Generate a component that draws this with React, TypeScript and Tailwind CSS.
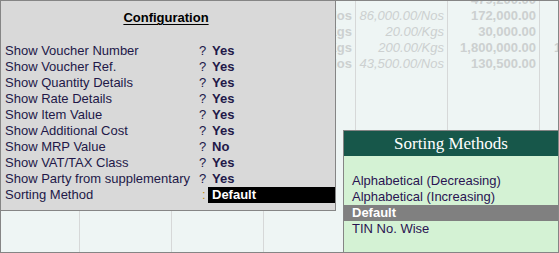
const configRows = [
  { label: "Show Voucher Number", value: "Yes" },
  { label: "Show Voucher Ref.", value: "Yes" },
  { label: "Show Quantity Details", value: "Yes" },
  { label: "Show Rate Details", value: "Yes" },
  { label: "Show Item Value", value: "Yes" },
  { label: "Show Additional Cost", value: "Yes" },
  { label: "Show MRP Value", value: "No" },
  { label: "Show VAT/TAX Class", value: "Yes" },
  { label: "Show Party from supplementary", value: "Yes" },
];

const sortOptions = [
  "Alphabetical (Decreasing)",
  "Alphabetical (Increasing)",
  "Default",
  "TIN No. Wise",
];

// rows of the voucher table lying behind the popups
const bgRows = [
  { unit: "", rate: "", amount: "479,200.00", extra: "" },
  { unit: "Nos", rate: "86,000.00/Nos", amount: "172,000.00", extra: "" },
  { unit: "Kgs", rate: "20.00/Kgs", amount: "30,000.00", extra: "" },
  { unit: "Kgs", rate: "200.00/Kgs", amount: "1,800,000.00", extra: "1,800,000.00" },
  { unit: "Nos", rate: "43,500.00/Nos", amount: "130,500.00", extra: "" },
];

export default function App() {
  return (
    <div
      className="relative w-[559px] h-[253px] overflow-hidden border border-[#858585] bg-[#eef5f4] text-[13px] leading-[16px]"
      style={{ fontFamily: '"Liberation Sans", Arial, sans-serif' }}
    >
      {/* Background table */}
      <div className="flex h-full">
        <div className="w-[79px] shrink-0 border-r border-[#d6d8d8]" />
        <div className="w-[92px] shrink-0 border-r border-[#d6d8d8]" />
        <div className="w-[92px] shrink-0 border-r border-[#d6d8d8]" />
        <div className="w-[92px] shrink-0 border-r border-[#d6d8d8] -mt-[9px] text-right pr-[3px] text-[#ccd0d0] font-bold">
          {bgRows.map((r, i) => (
            <div key={i} className="h-[16px]">{r.unit}</div>
          ))}
        </div>
        <div className="w-[92px] shrink-0 border-r border-[#d6d8d8] -mt-[9px] text-right pr-[3px] text-[#ccd0d0] italic">
          {bgRows.map((r, i) => (
            <div key={i} className="h-[16px]">{r.rate}</div>
          ))}
        </div>
        <div className="w-[92px] shrink-0 border-r border-[#d6d8d8] -mt-[9px] text-right pr-[3px] text-[#ccd0d0] font-bold">
          {bgRows.map((r, i) => (
            <div key={i} className="h-[16px]">{r.amount}</div>
          ))}
        </div>
        <div className="w-[92px] shrink-0 -mt-[9px] pl-[14px] text-[#ccd0d0] font-bold whitespace-nowrap">
          {bgRows.map((r, i) => (
            <div key={i} className="h-[16px]">{r.extra}</div>
          ))}
        </div>
      </div>

      {/* Configuration popup */}
      <div className="absolute left-0 top-0 w-[335px] h-[210px] bg-[#d9d9d9] border-r border-b border-[#858585] text-[#221848]">
        <div className="pt-[9px] pr-[4px] text-center">
          <span className="font-bold underline underline-offset-2 text-black">Configuration</span>
        </div>
        <div className="mt-[17px] pl-[4px]">
          {configRows.map((r) => (
            <div key={r.label} className="flex h-[16px] whitespace-nowrap">
              <span className="w-[194px] shrink-0">{r.label}</span>
              <span className="w-[13px] shrink-0">?</span>
              <span className="font-bold">{r.value}</span>
            </div>
          ))}
          <div className="flex h-[16px] whitespace-nowrap">
            <span className="w-[194px] shrink-0">Sorting Method</span>
            <span className="w-[9px] shrink-0 pl-[3px] text-[#c08a10]">:</span>
            <span className="flex-1 bg-black text-white font-bold pl-[4px]">Default</span>
          </div>
        </div>
      </div>

      {/* Sorting Methods list */}
      <div className="absolute left-[342px] top-[129px] right-0 bottom-0 border-l border-t border-[#858585] bg-[#d4f2d4] flex flex-col">
        <div
          className="h-[25px] bg-[#17574a] text-white text-[17px] leading-[25px] text-center"
          style={{ fontFamily: '"Liberation Serif", "Times New Roman", serif' }}
        >
          Sorting Methods
        </div>
        <div className="pt-[17px]">
          {sortOptions.map((o) =>
            o === "Default" ? (
              <div key={o} className="h-[16px] bg-[#808080] text-white font-bold pl-[8px]">
                {o}
              </div>
            ) : (
              <div key={o} className="h-[16px] pl-[8px] text-[#2a1452]">
                {o}
              </div>
            )
          )}
        </div>
      </div>
    </div>
  );
}
